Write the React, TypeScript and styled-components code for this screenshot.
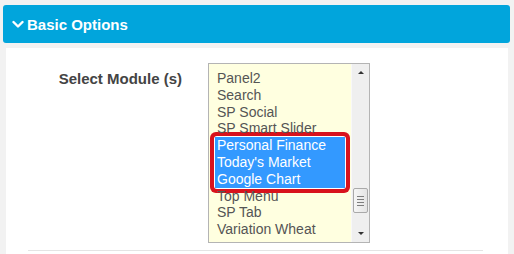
import { createGlobalStyle, styled } from "styled-components";

const modules = [
  { name: "Panel2", selected: false },
  { name: "Search", selected: false },
  { name: "SP Social", selected: false },
  { name: "SP Smart Slider", selected: false },
  { name: "Personal Finance", selected: true },
  { name: "Today's Market", selected: true },
  { name: "Google Chart", selected: true },
  { name: "Top Menu", selected: false },
  { name: "SP Tab", selected: false },
  { name: "Variation Wheat", selected: false },
];

function App() {
  const before = modules.slice(0, 4);
  const picked = modules.filter((m) => m.selected);
  const after = modules.slice(7);

  return (
    <>
      <GlobalStyle />
      <Header>
        <Chevron width="12" height="9" viewBox="0 0 12 9">
          <polyline points="1.5,2 6,6.5 10.5,2" />
        </Chevron>
        <HeaderTitle>Basic Options</HeaderTitle>
      </Header>
      <Panel>
        <FieldRow>
          <FieldLabel>Select Module (s)</FieldLabel>
          <ListBox>
            <Options>
              {before.map((m) => (
                <Option key={m.name}>{m.name}</Option>
              ))}
              <PickedGroup>
                {picked.map((m) => (
                  <Option key={m.name} $selected>
                    {m.name}
                  </Option>
                ))}
              </PickedGroup>
              {after.map((m) => (
                <Option key={m.name}>{m.name}</Option>
              ))}
            </Options>
            <ScrollTrack>
              <ArrowButton>
                <Arrow $down={false} />
              </ArrowButton>
              <ThumbArea>
                <Thumb>
                  <Grip />
                  <Grip />
                  <Grip />
                  <Grip />
                </Thumb>
              </ThumbArea>
              <ArrowButton>
                <Arrow $down />
              </ArrowButton>
            </ScrollTrack>
          </ListBox>
        </FieldRow>
      </Panel>
    </>
  );
}

export default App;

const GlobalStyle = createGlobalStyle`
  html, body {
    margin: 0;
    padding: 0;
    background: #f2f2f2;
    font-family: "Liberation Sans", Arial, sans-serif;
    overflow: hidden;
  }
  #root {
    height: 254px;
    display: flex;
    flex-direction: column;
  }
`;

const Header = styled.div`
  margin: 5px 4px 0 3px;
  height: 38px;
  background: #01a5dc;
  border-radius: 3px;
  display: flex;
  align-items: center;
  padding-left: 9px;
  gap: 3px;
`;

const Chevron = styled.svg`
  fill: none;
  stroke: #fff;
  stroke-width: 2.4;
  stroke-linecap: round;
  stroke-linejoin: round;
  margin-top: 1px;
`;

const HeaderTitle = styled.div`
  color: #fff;
  font-weight: bold;
  font-size: 15px;
`;

const Panel = styled.div`
  flex: 1;
  margin: 5px 6px 0 6px;
  background: #fff;
`;

const FieldRow = styled.div`
  margin: 0 25px 0 22px;
  padding: 15px 0 7px;
  border-bottom: 1px solid #e4e4e4;
  display: flex;
  gap: 26px;
`;

const FieldLabel = styled.div`
  width: 154px;
  text-align: right;
  font-size: 15px;
  font-weight: bold;
  color: #444;
  margin-top: 7px;
`;

const ListBox = styled.div`
  width: 160px;
  height: 178px;
  border: 1px solid #b4b4b4;
  background: #ffffe0;
  display: flex;
  overflow: hidden;
`;

const Options = styled.div`
  flex: 1;
  padding-top: 6px;
`;

const PickedGroup = styled.div`
  margin: 0 6px;
  border-radius: 2px;
  box-shadow: 0 0 0 1px #fff, 0 0 0 5px #d8121c;
`;

const Option = styled.div<{ $selected?: boolean }>`
  font-size: 14px;
  line-height: 16.8px;
  white-space: nowrap;
  padding-left: ${(p) => (p.$selected ? "2px" : "8px")};
  color: ${(p) => (p.$selected ? "#fff" : "#555")};
  background: ${(p) => (p.$selected ? "#3399ff" : "transparent")};
`;

const ScrollTrack = styled.div`
  width: 17px;
  background: #efefef;
  border-left: 1px solid #f8f8f8;
  display: flex;
  flex-direction: column;
`;

const ArrowButton = styled.div`
  height: 17px;
  display: flex;
  align-items: center;
  justify-content: center;
`;

const Arrow = styled.div<{ $down: boolean }>`
  width: 0;
  height: 0;
  border-left: 3.5px solid transparent;
  border-right: 3.5px solid transparent;
  ${(p) =>
    p.$down ? "border-top: 3px solid #333;" : "border-bottom: 3px solid #333;"}
`;

const ThumbArea = styled.div`
  flex: 1;
  padding-top: 107px;
`;

const Thumb = styled.div`
  margin: 0 1px 0 1px;
  height: 23px;
  border: 1px solid #a9a9a9;
  border-radius: 2px;
  background: linear-gradient(to right, #f6f6f6, #e4e4e4);
  display: flex;
  flex-direction: column;
  align-items: center;
  justify-content: center;
  gap: 2px;
`;

const Grip = styled.div`
  width: 7px;
  height: 1px;
  background: #7d7d7d;
`;
